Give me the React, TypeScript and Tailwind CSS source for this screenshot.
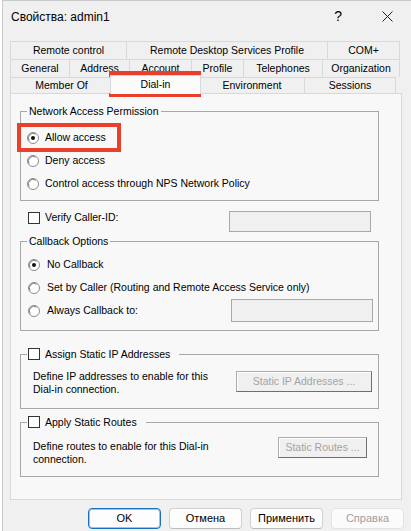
import type { ReactNode } from 'react'

const FONT = "font-['Liberation_Sans',Arial,sans-serif]"

function Radio({ checked = false }: { checked?: boolean }) {
  return (
    <svg width="12" height="12" viewBox="0 0 12 12" className="shrink-0">
      <circle cx="6" cy="6" r="5.5" fill="#fff" stroke="#8c8c8c" />
      <path d="M2.2 8.6A4.6 4.6 0 0 1 8.6 2.2" fill="none" stroke="#6e6e6e" strokeWidth="0.9" />
      {checked && <circle cx="6" cy="6" r="2" fill="#111" />}
    </svg>
  )
}

function Check() {
  return <span className="block h-[12px] w-[12px] shrink-0 border border-[#333] bg-white" />
}

function TextBox({ w, h }: { w: number; h: number }) {
  return (
    <div
      className="shrink-0 border border-[#a9a9a9] bg-[#f0f0f0]"
      style={{ width: w, height: h }}
    />
  )
}

function OldButton({ children, w }: { children: ReactNode; w: number }) {
  return (
    <div
      className="flex h-[21px] shrink-0 items-center justify-center border border-[#adadad] border-b-[#6f6f6f] border-r-[#6f6f6f] bg-[#f0f0f0] text-[#a3a3a3] shadow-[inset_1px_1px_0_#fff]"
      style={{ width: w }}
    >
      {children}
    </div>
  )
}

function Tab({ w, label, last = false }: { w: number; label: string; last?: boolean }) {
  return (
    <div
      className={`flex h-full shrink-0 items-center justify-center border-l border-t border-[#d9d9d9] bg-[#f0f0f0] ${
        last ? 'border-r' : ''
      }`}
      style={{ width: w }}
    >
      {label}
    </div>
  )
}

function Group({
  legend,
  h,
  children,
}: {
  legend: ReactNode
  h: number
  children: ReactNode
}) {
  return (
    <fieldset className="ml-[9px] w-[359px] border border-[#a7a7a7]" style={{ height: h }}>
      <legend className="ml-[6px] px-[2px] leading-[14px]">{legend}</legend>
      {children}
    </fieldset>
  )
}

export default function App() {
  return (
    <div className={`relative h-[531px] w-[411px] overflow-hidden bg-white text-[10.5px] text-black ${FONT}`}>
      <div className="ml-[2px] flex h-full flex-col border-l border-t border-[#c9c9c9] bg-[#f0f0f0]">
        {/* title bar */}
        <div className="flex h-[31px] items-center">
          <span className="ml-[8px] text-[12px]">Свойства: admin1</span>
          <span className="ml-auto mr-[40px] text-[14px]">?</span>
          <svg width="11" height="11" viewBox="0 0 11 11" className="mr-[18px]">
            <path d="M0.5 0.5L10.5 10.5M10.5 0.5L0.5 10.5" stroke="#222" strokeWidth="1" />
          </svg>
        </div>

        {/* tabs */}
        <div className="ml-[7px] mt-[9px] w-[390px]">
          <div className="flex h-[18px]">
            <Tab w={116} label="Remote control" />
            <Tab w={201} label="Remote Desktop Services Profile" />
            <Tab w={73} label="COM+" last />
          </div>
          <div className="flex h-[18px]">
            <Tab w={59} label="General" />
            <Tab w={60} label="Address" />
            <Tab w={62} label="Account" />
            <Tab w={52} label="Profile" />
            <Tab w={79} label="Telephones" />
            <Tab w={78} label="Organization" last />
          </div>
          <div className="relative z-10 flex h-[16px] items-end">
            <Tab w={102} label="Member Of" />
            <div className="relative -mx-[2px] -mb-px flex h-[19px] w-[91px] shrink-0 items-center justify-center border-x border-t border-[#d9d9d9] bg-[#fbfbfb]">
              Dial-in
            </div>
            <Tab w={105} label="Environment" />
            <Tab w={92} label="Sessions" last />
          </div>
        </div>

        {/* tab page */}
        <div className="ml-[7px] flex h-[407px] w-[392px] flex-col border border-[#d9d9d9] bg-[#f8f8f8]">
          <div className="mt-[10px]">
            <Group legend="Network Access Permission" h={97}>
              <div className="mt-[8px] flex flex-col pl-[6px]">
                <label className="flex h-[23px] items-center gap-[6px]">
                  <Radio checked />
                  Allow access
                </label>
                <label className="flex h-[23px] items-center gap-[6px]">
                  <Radio />
                  Deny access
                </label>
                <label className="flex h-[23px] items-center gap-[6px]">
                  <Radio />
                  Control access through NPS Network Policy
                </label>
              </div>
            </Group>
          </div>

          <div className="ml-[17px] mt-[10px] flex items-start">
            <div className="flex h-[14px] w-[201px] items-center gap-[5px]">
              <Check />
              Verify Caller-ID:
            </div>
            <TextBox w={142} h={21} />
          </div>

          <div className="mt-[2px]">
            <Group legend="Callback Options" h={97}>
              <div className="mt-[5px] flex flex-col pl-[7px] pr-[5px]">
                <label className="flex h-[23px] items-center gap-[7px]">
                  <Radio checked />
                  No Callback
                </label>
                <label className="flex h-[23px] items-center gap-[7px]">
                  <Radio />
                  Set by Caller (Routing and Remote Access Service only)
                </label>
                <label className="flex h-[23px] items-center gap-[7px]">
                  <Radio />
                  Always Callback to:
                  <span className="ml-auto">
                    <TextBox w={142} h={23} />
                  </span>
                </label>
              </div>
            </Group>
          </div>

          <div className="mt-[16px]">
            <Group
              h={62}
              legend={
                <span className="-ml-px flex items-center gap-[5px] pr-[7px]">
                  <Check />
                  Assign Static IP Addresses
                </span>
              }
            >
              <div className="mt-[9px] flex items-start pl-[12px]">
                <p className="w-[203px] leading-[13px]">
                  Define IP addresses to enable for this
                  <br />
                  Dial-in connection.
                </p>
                <div className="mt-[1px]">
                  <OldButton w={136}>Static IP Addresses ...</OldButton>
                </div>
              </div>
            </Group>
          </div>

          <div className="mt-[6px]">
            <Group
              h={62}
              legend={
                <span className="-ml-px flex items-center gap-[5px] pr-[7px]">
                  <Check />
                  Apply Static Routes
                </span>
              }
            >
              <div className="mt-[11px] flex items-start pl-[12px]">
                <p className="w-[245px] leading-[13px]">
                  Define routes to enable for this Dial-in
                  <br />
                  connection.
                </p>
                <div className="-mt-[3px]">
                  <OldButton w={89}>Static Routes ...</OldButton>
                </div>
              </div>
            </Group>
          </div>
        </div>

        {/* dialog buttons */}
        <div className="mt-[8px] flex gap-[8px] pl-[85px]">
          <button className="h-[21px] w-[73px] rounded-[4px] border border-[#1a6fc2] bg-[#fdfdfd] text-[11px] shadow-[inset_0_0_0_1px_#9cc3e8]">
            OK
          </button>
          <button className="h-[21px] w-[73px] rounded-[4px] border border-[#d0d0d0] border-b-[#bcbcbc] bg-[#fdfdfd] text-[11px]">
            Отмена
          </button>
          <button className="h-[21px] w-[73px] rounded-[4px] border border-[#d0d0d0] border-b-[#bcbcbc] bg-[#fdfdfd] text-[11px]">
            Применить
          </button>
          <button className="h-[21px] w-[73px] rounded-[4px] border border-[#e3e3e3] bg-[#fbfbfb] text-[11px] text-[#a0a0a0]">
            Справка
          </button>
        </div>
      </div>

      {/* red highlight marks */}
      <div className="pointer-events-none absolute left-[109px] top-[71px] h-[26px] w-[92px] border-[4px] border-[#ea3f2b]" />
      <div className="pointer-events-none absolute left-[17px] top-[123px] h-[29px] w-[104px] border-[4px] border-[#ea3f2b]" />
    </div>
  )
}
